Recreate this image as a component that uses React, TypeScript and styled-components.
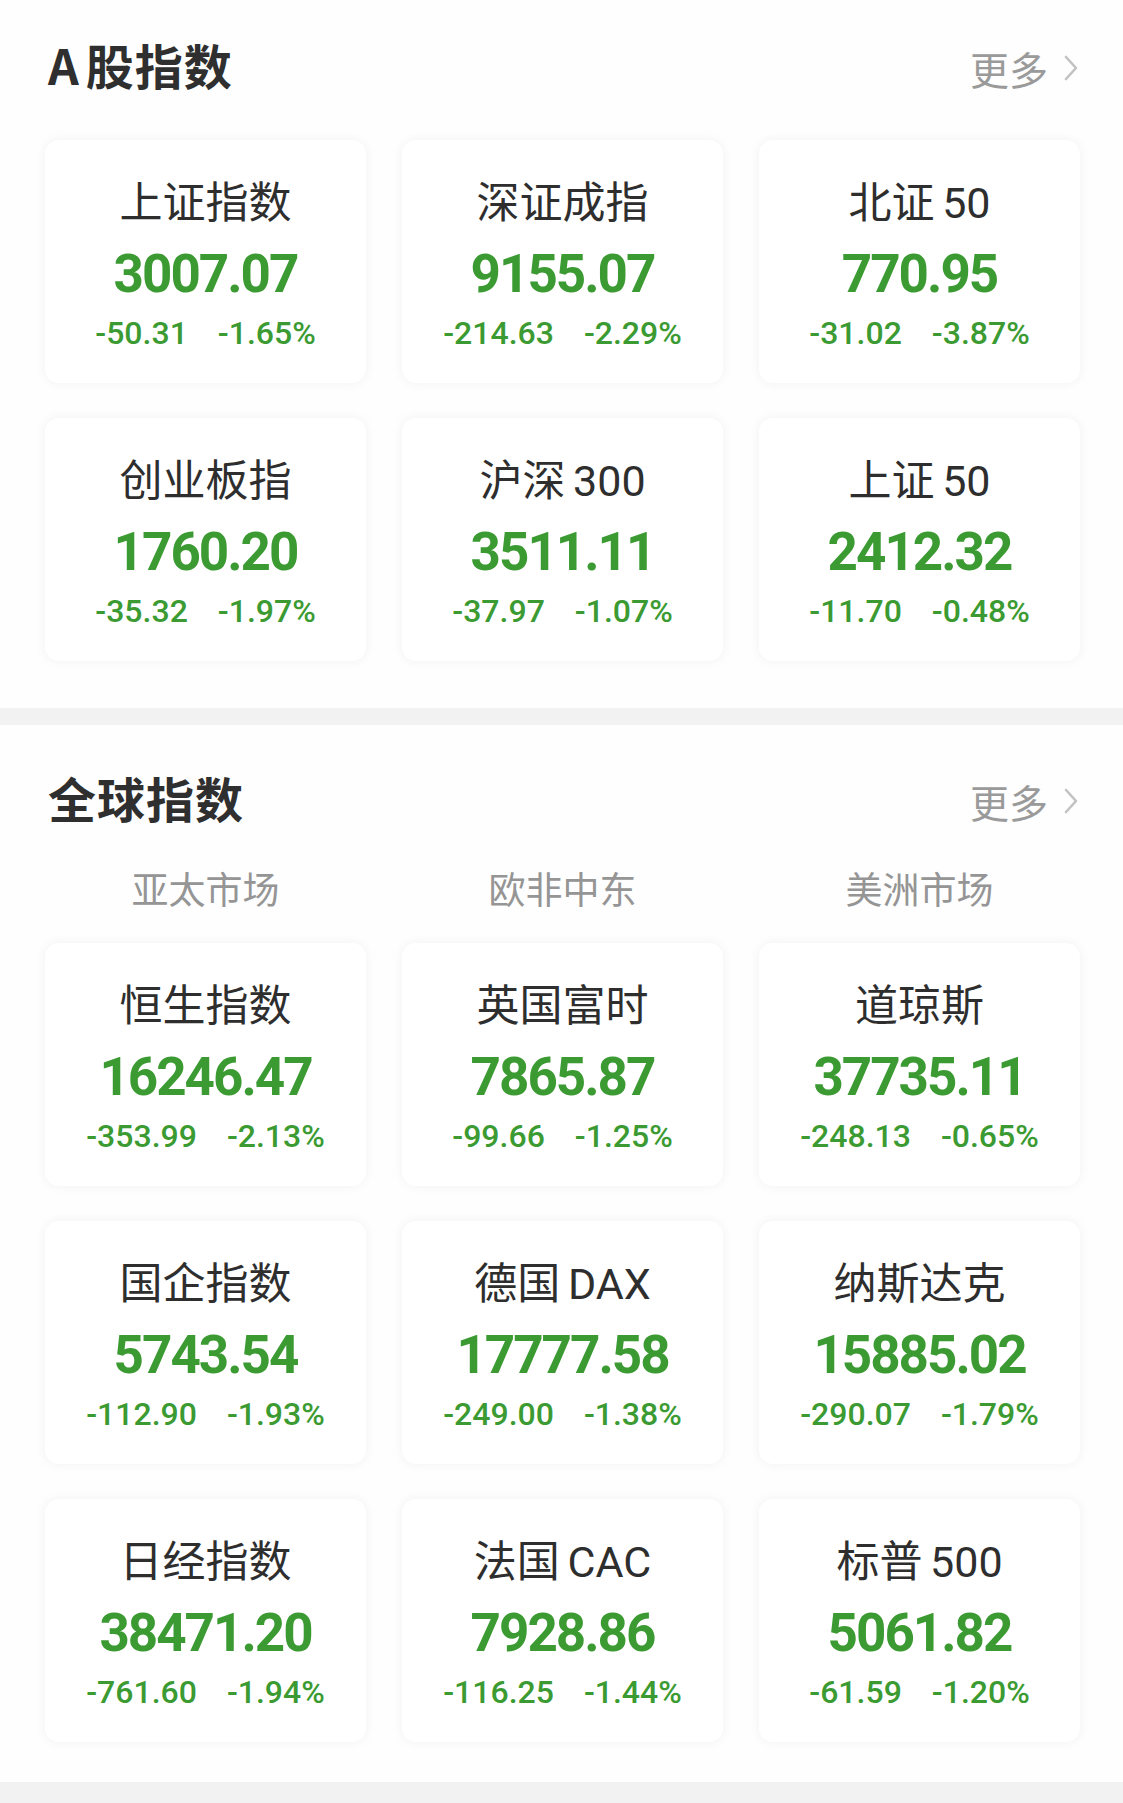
import React from "react";
import styled, { createGlobalStyle } from "styled-components";

const GlobalStyle = createGlobalStyle`
  html, body {
    margin: 0;
    padding: 0;
    background: #fefefe;
  }
  body {
    font-family: Roboto, "Noto Sans CJK SC", sans-serif;
    color: #333;
  }
`;

const Page = styled.div`
  width: 1123px;
  display: flex;
  flex-direction: column;
`;

const Section = styled.section<{ $top: number; $bottom: number }>`
  padding: ${(p) => p.$top}px 43px ${(p) => p.$bottom}px 45px;
  background: #fefefe;
`;

const Band = styled.div<{ $h: number }>`
  height: ${(p) => p.$h}px;
  background: #f2f2f2;
`;

const Header = styled.div`
  display: flex;
  align-items: center;
  justify-content: space-between;
  height: 60px;
`;

const Title = styled.h2`
  margin: 0;
  padding-left: 3px;
  font-family: "Noto Sans CJK SC", sans-serif;
  font-size: 48px;
  font-weight: 700;
  letter-spacing: 1px;
  line-height: 60px;
  color: #2f2f2f;
`;

const TitleLatin = styled.span`
  margin-right: 6px;
`;

const More = styled.div`
  display: flex;
  align-items: center;
  gap: 16px;
  padding-top: 8px;
  padding-right: 2px;
  font-family: "Noto Sans CJK SC", sans-serif;
  font-size: 39px;
  line-height: 44px;
  color: #9a9a9a;
`;

const Grid = styled.div<{ $mt: number }>`
  display: grid;
  grid-template-columns: repeat(3, 1fr);
  column-gap: 36px;
  row-gap: 35px;
  margin-top: ${(p) => p.$mt}px;
`;

const Tabs = styled.div`
  display: grid;
  grid-template-columns: repeat(3, 1fr);
  column-gap: 36px;
  margin-top: 39px;
`;

const Tab = styled.div`
  text-align: center;
  font-family: "Noto Sans CJK SC", sans-serif;
  font-size: 37px;
  line-height: 44px;
  color: #959595;
`;

const Card = styled.div`
  height: 243px;
  box-sizing: border-box;
  background: #fff;
  border-radius: 14px;
  box-shadow: 0 0 12px rgba(0, 0, 0, 0.055);
  display: flex;
  flex-direction: column;
  align-items: center;
`;

const Name = styled.div`
  margin-top: 38px;
  font-family: Roboto, "Noto Sans CJK SC", sans-serif;
  font-size: 43px;
  line-height: 50px;
  color: #2e2e2e;
  white-space: nowrap;
  word-spacing: -3px;
`;

const Value = styled.div`
  margin-top: 18px;
  font-family: Roboto, sans-serif;
  font-weight: 700;
  font-size: 53px;
  letter-spacing: -2px;
  line-height: 56px;
  color: #3b9b32;
  white-space: nowrap;
`;

const Change = styled.div`
  margin-top: 11px;
  display: flex;
  gap: 30px;
  font-family: Roboto, sans-serif;
  font-weight: 500;
  font-size: 32px;
  line-height: 40px;
  color: #3b9b32;
  white-space: nowrap;
`;

type Item = { name: string; value: string; diff: string; pct: string };

const aShares: Item[] = [
  { name: "上证指数", value: "3007.07", diff: "-50.31", pct: "-1.65%" },
  { name: "深证成指", value: "9155.07", diff: "-214.63", pct: "-2.29%" },
  { name: "北证 50", value: "770.95", diff: "-31.02", pct: "-3.87%" },
  { name: "创业板指", value: "1760.20", diff: "-35.32", pct: "-1.97%" },
  { name: "沪深 300", value: "3511.11", diff: "-37.97", pct: "-1.07%" },
  { name: "上证 50", value: "2412.32", diff: "-11.70", pct: "-0.48%" },
];

const globalIdx: Item[] = [
  { name: "恒生指数", value: "16246.47", diff: "-353.99", pct: "-2.13%" },
  { name: "英国富时", value: "7865.87", diff: "-99.66", pct: "-1.25%" },
  { name: "道琼斯", value: "37735.11", diff: "-248.13", pct: "-0.65%" },
  { name: "国企指数", value: "5743.54", diff: "-112.90", pct: "-1.93%" },
  { name: "德国 DAX", value: "17777.58", diff: "-249.00", pct: "-1.38%" },
  { name: "纳斯达克", value: "15885.02", diff: "-290.07", pct: "-1.79%" },
  { name: "日经指数", value: "38471.20", diff: "-761.60", pct: "-1.94%" },
  { name: "法国 CAC", value: "7928.86", diff: "-116.25", pct: "-1.44%" },
  { name: "标普 500", value: "5061.82", diff: "-61.59", pct: "-1.20%" },
];

const Chevron = () => (
  <svg width="14" height="30" viewBox="0 0 14 30" fill="none">
    <polyline points="2,4 12,15 2,26" stroke="#c2c2c2" strokeWidth="2.6" strokeLinecap="round" strokeLinejoin="round" />
  </svg>
);

const IndexCard = ({ item }: { item: Item }) => (
  <Card>
    <Name>{item.name}</Name>
    <Value>{item.value}</Value>
    <Change>
      <span>{item.diff}</span>
      <span>{item.pct}</span>
    </Change>
  </Card>
);

const SectionHeader = ({ latin, title }: { latin?: string; title: string }) => (
  <Header>
    <Title>
      {latin && <TitleLatin>{latin}</TitleLatin>}
      {title}
    </Title>
    <More>
      <span>更多</span>
      <Chevron />
    </More>
  </Header>
);

export default function App() {
  return (
    <Page>
      <GlobalStyle />
      <Section $top={34} $bottom={47}>
        <SectionHeader latin="A" title="股指数" />
        <Grid $mt={46}>
          {aShares.map((it) => (
            <IndexCard key={it.name} item={it} />
          ))}
        </Grid>
      </Section>
      <Band $h={17} />
      <Section $top={42} $bottom={40}>
        <SectionHeader title="全球指数" />
        <Tabs>
          <Tab>亚太市场</Tab>
          <Tab>欧非中东</Tab>
          <Tab>美洲市场</Tab>
        </Tabs>
        <Grid $mt={33}>
          {globalIdx.map((it) => (
            <IndexCard key={it.name} item={it} />
          ))}
        </Grid>
      </Section>
      <Band $h={21} />
    </Page>
  );
}
